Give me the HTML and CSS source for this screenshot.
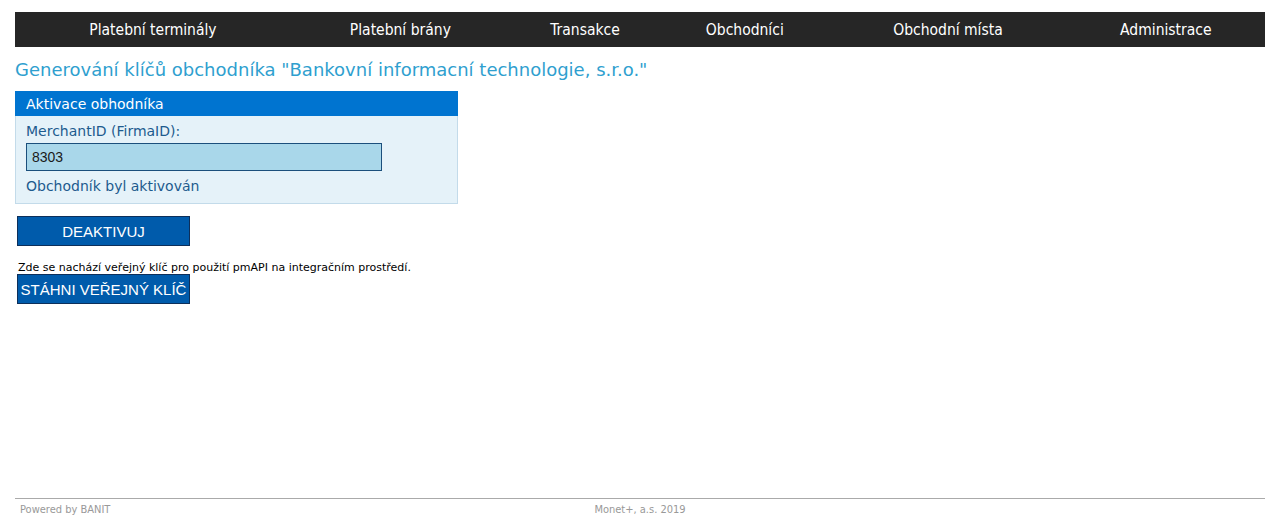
FILE: index.html
```html
<!DOCTYPE html>
<html lang="cs">
<head>
<meta charset="utf-8">
<title>Generování klíčů obchodníka</title>
<link rel="stylesheet" href="styles.css">
</head>
<body>
<div class="page">
  <nav class="menu">
    <a class="menu-item" href="#">Platební terminály</a>
    <a class="menu-item" href="#">Platební brány</a>
    <a class="menu-item" href="#">Transakce</a>
    <a class="menu-item" href="#">Obchodníci</a>
    <a class="menu-item" href="#">Obchodní místa</a>
    <a class="menu-item" href="#">Administrace</a>
  </nav>
  <main class="content">
    <h1 class="title">Generování klíčů obchodníka "Bankovní informacní technologie, s.r.o."</h1>
    <section class="panel">
      <div class="panel-head">Aktivace obhodníka</div>
      <div class="panel-body">
        <label class="label" for="mid">MerchantID (FirmaID):</label>
        <input class="input" id="mid" type="text" value="8303">
        <div class="label status">Obchodník byl aktivován</div>
      </div>
    </section>
    <button class="btn btn-deact" type="button">DEAKTIVUJ</button>
    <p class="note">Zde se nachází veřejný klíč pro použití pmAPI na integračním prostředí.</p>
    <button class="btn btn-key" type="button">STÁHNI VEŘEJNÝ KLÍČ</button>
  </main>
  <footer class="footer">
    <span class="footer-left">Powered by BANIT</span>
    <span class="footer-center">Monet+, a.s. 2019</span>
  </footer>
</div>
</body>
</html>
```

FILE: styles.css
```css
html, body {
  margin: 0;
  padding: 0;
  background: #ffffff;
}
body {
  font-family: "DejaVu Sans", Verdana, sans-serif;
  color: #000;
}
.page {
  width: 1250px;
  margin: 0 0 0 15px;
  padding-top: 12px;
  box-sizing: border-box;
  min-height: 527px;
  display: flex;
  flex-direction: column;
}
.menu {
  display: table;
  width: 100%;
  height: 35px;
  background: #262626;
  table-layout: auto;
}
.menu-item {
  display: table-cell;
  vertical-align: middle;
  text-align: center;
  color: #ffffff;
  text-decoration: none;
  font-family: "DejaVu Sans Condensed", Tahoma, sans-serif;
  font-size: 15.5px;
  white-space: nowrap;
}
.content {
  flex: 1;
}
.title {
  margin: 12px 0 10px 0;
  font-size: 18px;
  font-weight: normal;
  color: #2f9fcf;
  line-height: 22px;
}
.panel {
  width: 443px;
  box-sizing: border-box;
  border: 1px solid #c3dbea;
  border-top: none;
  background: #e5f2f9;
}
.panel-head {
  margin: 0 -1px;
  height: 25px;
  line-height: 27px;
  background: #0074d0;
  color: #ffffff;
  font-size: 14px;
  padding-left: 11px;
}
.panel-body {
  padding: 6px 10px 8px 10px;
  display: flex;
  flex-direction: column;
  align-items: flex-start;
}
.label {
  font-size: 14px;
  color: #1d5b8e;
  line-height: 18px;
}
.input {
  margin: 3px 0 6px 0;
  width: 356px;
  height: 28px;
  box-sizing: border-box;
  border: 1px solid #1b4f7c;
  background: #a9d7ea;
  padding: 0 5px;
  font-family: "Liberation Sans", Arial, sans-serif;
  font-size: 14px;
  color: #1a1a1a;
  outline: none;
}
.btn {
  display: block;
  width: 173px;
  height: 30px;
  margin-left: 2px;
  border: 1px solid #0d2f5a;
  background: #005bab;
  color: #ffffff;
  font-family: "Liberation Sans", Arial, sans-serif;
  font-size: 15px;
  padding: 0;
  text-align: center;
  white-space: nowrap;
  cursor: pointer;
}
.btn-deact {
  margin-top: 12px;
}
.btn-key {
  font-size: 15px;
}
.note {
  margin: 15px 0 0 3px;
  font-size: 11px;
  line-height: 13px;
}
.footer {
  position: relative;
  border-top: 1px solid #aaaaaa;
  height: 29px;
  box-sizing: border-box;
  padding-top: 4px;
  font-family: "DejaVu Sans Condensed", Tahoma, sans-serif;
  font-size: 11px;
  line-height: 14px;
  color: #999999;
  display: flex;
  align-items: flex-start;
}
.footer-left {
  padding-left: 5px;
}
.footer-center {
  position: absolute;
  top: 4px;
  left: 0;
  right: 0;
  text-align: center;
}
```
